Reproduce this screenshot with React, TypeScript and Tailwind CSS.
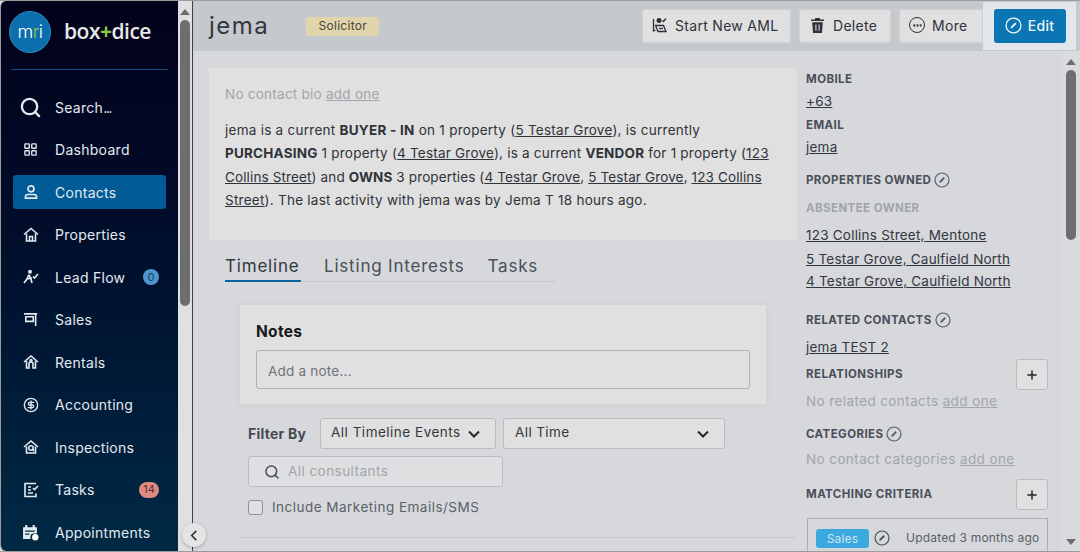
import { CircleDollarSign, Ellipsis, LayoutGrid, Plus, Search } from "lucide-react";
import type { ReactNode } from "react";

type IconProps = { className?: string };

const EditCircle = ({ className = "h-[17px] w-[17px]" }: IconProps) => (
  <svg viewBox="0 0 16 16" fill="none" className={className} stroke="currentColor">
    <circle cx="8" cy="8" r="7" strokeWidth="1.2" />
    <path d="M5.2 10.8l.4-1.700 4-4 1.300 1.300-4 4z" fill="currentColor" stroke="none" />
  </svg>
);

const HomeIcon = () => (
  <svg viewBox="0 0 16 16" fill="none" stroke="currentColor" strokeWidth="1.6" className="h-[16px] w-[16px]">
    <path d="M1 7.500L8 1.500l7 6" />
    <path d="M3.500 6.500V14h9V6.500" />
    <path d="M6.500 14V9.500h3V14" />
  </svg>
);

const LeadIcon = () => (
  <svg viewBox="0 0 16 16" fill="none" stroke="currentColor" strokeWidth="1.700" className="h-[16px] w-[16px]">
    <circle cx="7" cy="2.800" r="2" fill="currentColor" stroke="none" />
    <path d="M6 5.500L4 10l-3 4M6 6l2 4 1 4M4 10l5-1" />
    <path d="M10 7.500l1.500 1.500L15 5" />
  </svg>
);

const SalesIcon = () => (
  <svg viewBox="0 0 16 16" fill="none" stroke="currentColor" strokeWidth="1.700" className="h-[15px] w-[15px]">
    <path d="M1 2h14M13.500 2v13" />
    <path d="M3 5h8v5H3z" />
  </svg>
);

const RentalIcon = () => (
  <svg viewBox="0 0 16 16" fill="none" stroke="currentColor" strokeWidth="1.600" className="h-[16px] w-[16px]">
    <path d="M1 8l7-6 7 6" />
    <path d="M3.500 7v7h2.500v-4a2 2 0 014 0v4h2.500V7" />
    <circle cx="8" cy="6.500" r="1" />
  </svg>
);

const InspectIcon = () => (
  <svg viewBox="0 0 16 16" fill="none" stroke="currentColor" strokeWidth="1.600" className="h-[16px] w-[16px]">
    <path d="M1 8l7-6 7 6" />
    <path d="M3.500 7.500V14h9V7.500" />
    <circle cx="8" cy="9" r="2.200" />
    <path d="M9.500 10.500L11 12" />
  </svg>
);

const TaskIcon = () => (
  <svg viewBox="0 0 16 16" fill="none" stroke="currentColor" strokeWidth="1.600" className="h-[16px] w-[16px]">
    <path d="M13 1.500H2v13h11v-3" />
    <path d="M5 5h3M5 8h3M5 11h5" />
    <path d="M10 6l1.500 1.500L15 4" />
  </svg>
);

const ApptIcon = () => (
  <svg viewBox="0 0 16 16" className="h-[17px] w-[17px]">
    <path d="M1 3h2V1h2v2h5V1h2v2h2v6h-3a3 3 0 00-3 3v2H1z" fill="currentColor" />
    <path d="M3 6h9v1.200H3zM3 9h4v1.200H3z" fill="#012a45" />
    <circle cx="12.500" cy="12.500" r="3" fill="#fff" />
  </svg>
);

const UserIcon = () => (
  <svg viewBox="0 0 16 16" fill="none" stroke="currentColor" strokeWidth="1.700" className="h-[16px] w-[16px]">
    <circle cx="8" cy="4.800" r="3" />
    <path d="M2.500 14.200v-1.500c0-1.400 1-2.200 2.500-2.200h6c1.500 0 2.500.8 2.500 2.200v1.500z" />
  </svg>
);

const AmlIcon = () => (
  <svg viewBox="0 0 16 16" fill="none" stroke="#2d3138" strokeWidth="1.300" className="h-[16px] w-[16px]">
    <path d="M1.500 2v12l2-1" />
    <path d="M3.500 8.500h8l2.500 6H6z" />
    <circle cx="7" cy="3.500" r="2.500" fill="#2d3138" stroke="none" />
    <path d="M10.500 3.500l1 1 2.500-3" />
    <path d="M7 11.500h4" />
  </svg>
);

const TrashIcon = () => (
  <svg viewBox="0 0 16 16" className="h-[17px] w-[17px]" fill="#2d3138">
    <path d="M6 1h4l.6 1.300H14v1.500H2V2.300h3.400z" />
    <path d="M3 5h10l-.8 10H3.800zM6 7v6h1V7zm3 0v6h1V7z" fillRule="evenodd" />
  </svg>
);

const MoreIcon = () => (
  <span className="flex h-[16px] w-[16px] items-center justify-center rounded-full border-[1.500px] border-[#2d3138] text-[#2d3138]">
    <Ellipsis className="h-[11px] w-[11px]" strokeWidth={3} />
  </span>
);

const Chevron = () => (
  <svg viewBox="0 0 12 8" fill="none" stroke="#23262c" strokeWidth="2" className="h-[8px] w-[12px]">
    <path d="M1 1.500l5 5 5-5" />
  </svg>
);

const navItems: { label: ReactNode; key: string; icon: ReactNode; badge?: string; badgeClass?: string }[] = [
  {
    key: "search",
    label: (
      <>
        Search<span className="tracking-[-1.500px]">...</span>
      </>
    ),
    icon: <Search className="h-[23px] w-[23px]" strokeWidth={2.400} />,
  },
  { key: "dashboard", label: "Dashboard", icon: <LayoutGrid className="h-[15px] w-[15px]" strokeWidth={2.200} /> },
  { key: "contacts", label: "Contacts", icon: <UserIcon /> },
  { key: "properties", label: "Properties", icon: <HomeIcon /> },
  { key: "leadflow", label: "Lead Flow", icon: <LeadIcon />, badge: "0", badgeClass: "w-4 bg-[#4f96cf] text-[#123f63]" },
  { key: "sales", label: "Sales", icon: <SalesIcon /> },
  { key: "rentals", label: "Rentals", icon: <RentalIcon /> },
  { key: "accounting", label: "Accounting", icon: <CircleDollarSign className="h-[16px] w-[16px]" strokeWidth={2} /> },
  { key: "inspections", label: "Inspections", icon: <InspectIcon /> },
  { key: "tasks", label: "Tasks", icon: <TaskIcon />, badge: "14", badgeClass: "w-5 bg-[#de8a80] text-[#5c2d2a]" },
  { key: "appointments", label: "Appointments", icon: <ApptIcon /> },
];

const Sidebar = () => (
  <aside className="flex w-[178px] shrink-0 flex-col rounded-l-md border-l border-[#9b9b9b] bg-gradient-to-b from-[#02021a] via-[#00112e] to-[#012a45] text-[#e4eaf0]">
    <div className="ml-[10px] mr-[10px] flex h-[69px] items-center gap-[13px] border-b border-[#0f4a7c] pb-[7px]">
      <div className="-ml-[2px] flex h-[42px] w-[42px] shrink-0 items-center justify-center rounded-full border border-[#2b86c2] bg-[#0b6fae] text-[18px] font-light tracking-[-0.4px] text-white">
        m<span className="text-[#8bc53f]">r</span>i
      </div>
      <div className="text-[21px] font-semibold tracking-[-0.5px] text-[#e8e8e8] [font-family:'Open_Sans',sans-serif]">
        box<span className="font-bold text-[#8dc63f]">+</span>dice
      </div>
    </div>
    <nav className="mt-[20px] flex flex-col gap-[8.500px] pl-[12px] pr-[12px]">
      {navItems.map((item) => (
        <div
          key={item.key}
          className={`flex h-[34px] items-center rounded-[3px] ${item.key === "contacts" ? "bg-[#005b96]" : ""}`}
        >
          <span className="flex w-[35px] justify-center">{item.icon}</span>
          <span className="ml-[7px] flex-1 text-[14px] tracking-[0.28px]">{item.label}</span>
          {item.badge && (
            <span className={`mr-[7px] flex h-4 items-center justify-center rounded-full text-[11px] ${item.badgeClass}`}>
              {item.badge}
            </span>
          )}
        </div>
      ))}
    </nav>
  </aside>
);

const ScrollBar = ({ className, thumb, down }: { className: string; thumb: string; down?: boolean }) => (
  <div className={`flex shrink-0 flex-col items-center ${className}`}>
    <div className="mt-[8px] h-0 w-0 border-x-[5px] border-b-[6px] border-x-transparent border-b-[#6e6e6e]" />
    <div className={`mt-[5px] w-[10px] rounded-full bg-[#6e6e6e] ${thumb}`} />
    {down && <div className="mt-auto mb-[6px] h-0 w-0 border-x-[5px] border-t-[6px] border-x-transparent border-t-[#6e6e6e]" />}
  </div>
);

const HeaderButton = ({ icon, label, className }: { icon: ReactNode; label: string; className: string }) => (
  <button
    type="button"
    className={`flex h-[34px] items-center gap-[7px] rounded-[3px] border border-[#cfd2d6] bg-[#e0e0e0] pb-[2px] pl-[9px] text-[14px] tracking-[0.3px] text-[#2f333a] ${className}`}
  >
    {icon}
    {label}
  </button>
);

const Header = () => (
  <header className="flex h-[50px] shrink-0 items-center bg-[#c5c8cd] pl-[16px]">
    <h1 className="text-[24px] tracking-[1.500px] text-[#33373f]">jema</h1>
    <span className="ml-[37px] flex h-[19px] w-[73px] items-center justify-center rounded-[3px] bg-[#e0d5ab] text-[12px] tracking-[0.3px] text-[#4b4638]">
      Solicitor
    </span>
    <div className="ml-auto flex h-full items-center">
      <HeaderButton icon={<AmlIcon />} label="Start New AML" className="w-[149px]" />
      <HeaderButton icon={<TrashIcon />} label="Delete" className="ml-[8px] w-[92px]" />
      <HeaderButton icon={<MoreIcon />} label="More" className="ml-[8px] w-[84px] rounded-r-none" />
      <div className="mr-[4px] flex h-[48px] w-[93px] items-center justify-center bg-[#e3e6ea]">
        <button
          type="button"
          className="flex h-[34px] w-[72px] items-center justify-center gap-[6px] rounded-[3px] bg-[#0b76b3] pb-[2px] text-[14px] font-medium tracking-[0.3px] text-[#eef5fa]"
        >
          <EditCircle />
          Edit
        </button>
      </div>
    </div>
  </header>
);

const Main = () => (
  <div className="min-w-0 flex-1 pl-[16px] pt-[17px]">
    <section className="h-[172px] w-[588px] bg-[#e0e0e0] px-4 pt-[17px] text-[13.500px] text-[#2f333a]">
      <p className="leading-[18px] tracking-[0.25px] text-[#a2a5ab]">
        No contact bio <span className="underline">add one</span>
      </p>
      <p className="mt-[16px] whitespace-nowrap leading-[23.400px]">
        <span className="tracking-[0.26px]">
          jema is a current <b>BUYER - IN</b> on 1 property (<u>5 Testar Grove</u>), is currently
        </span>
        <br />
        <span className="tracking-[0.21px]">
          <b>PURCHASING</b> 1 property (<u>4 Testar Grove</u>), is a current <b>VENDOR</b> for 1 property (<u>123</u>
        </span>
        <br />
        <span className="tracking-[0.13px]">
          <u>Collins Street</u>) and <b>OWNS</b> 3 properties (<u>4 Testar Grove</u>, <u>5 Testar Grove</u>, <u>123 Collins</u>
        </span>
        <br />
        <span className="tracking-[0.25px]">
          <u>Street</u>). The last activity with jema was by Jema T 18 hours ago.
        </span>
      </p>
    </section>

    <div className="ml-[16px] mt-[15px] flex h-[27px] w-[332px] gap-[23px] border-b border-[#c6c8cc] text-[17px] leading-[22px] tracking-[0.8px] text-[#4a4f58]">
      <span className="h-[27px] w-[76px] whitespace-nowrap border-b-2 border-[#0b66a0] text-[#33373f]">Timeline</span>
      <span>Listing Interests</span>
      <span>Tasks</span>
    </div>

    <section className="ml-[31px] mt-[23px] h-[99px] w-[526px] bg-[#e0e0e0] px-4 pt-[17px] shadow-[0_0_8px_rgba(0,0,0,0.05)]">
      <h2 className="text-[15.500px] font-bold leading-[20px] tracking-[0.3px] text-[#15181d]">Notes</h2>
      <div className="mt-[8px] flex h-[39px] items-center rounded-[3px] border border-[#aeb1b6] px-[11px] pt-[3px] text-[13.500px] tracking-[0.22px] text-[#6f737a]">
        Add a note...
      </div>
    </section>

    <div className="ml-[39px] mt-[14px] flex items-center">
      <span className="w-[72px] whitespace-nowrap text-[14px] font-bold tracking-[0.25px] text-[#454a53]">Filter By</span>
      <div className="flex h-[31px] w-[176px] items-center justify-between whitespace-nowrap rounded-[3px] border border-[#b9bcc1] bg-[#e0e0e0] pl-[10px] pr-[15px] text-[13.500px] tracking-[0.5px] text-[#33373f]">
        <span className="pb-[2px]">All Timeline Events</span> <Chevron />
      </div>
      <div className="ml-[7px] flex h-[31px] w-[222px] items-center justify-between rounded-[3px] border border-[#b9bcc1] bg-[#e0e0e0] pl-[11px] pr-[15px] text-[13.500px] tracking-[0.4px] text-[#33373f]">
        <span className="pb-[2px]">All Time</span> <Chevron />
      </div>
    </div>

    <div className="ml-[39px] mt-[7px] flex h-[31px] w-[255px] items-center rounded-[3px] border border-[#b9bcc1] bg-[#dedfe0] pl-[15px] text-[13.500px] tracking-[0.45px] text-[#a2a5ab]">
      <Search className="mr-[8px] h-[16px] w-[16px] text-[#4a4f58]" strokeWidth={2.300} />
      All consultants
    </div>

    <label className="ml-[39px] mt-[10px] flex items-center gap-[9px] text-[13.500px] tracking-[0.48px] text-[#5a5f68]">
      <span className="h-[15px] w-[15px] rounded-[3px] border border-[#8e9197] bg-[#e0e0e0]" />
      Include Marketing Emails/SMS
    </label>

    <div className="ml-[31px] mt-[20px] w-[557px] border-t border-[#c6c8cc]" />
  </div>
);

const Label = ({ children, className = "", color = "text-[#4a4f58]" }: { children: ReactNode; className?: string; color?: string }) => (
  <div className={`flex items-center gap-[3px] whitespace-nowrap text-[11.500px] font-bold leading-[16px] tracking-[0.42px] ${color} ${className}`}>
    {children}
  </div>
);

const Link = ({ children, className = "" }: { children: ReactNode; className?: string }) => (
  <div className={`text-[13.500px] leading-[18px] tracking-[0.22px] text-[#33373f] underline ${className}`}>{children}</div>
);

const Empty = ({ text, className }: { text: string; className: string }) => (
  <div className={`whitespace-nowrap text-[13.500px] leading-[18px] tracking-[0.4px] text-[#a2a5ab] ${className}`}>
    {text} <span className="underline">add one</span>
  </div>
);

const PlusButton = () => (
  <button type="button" className="flex h-[31px] w-[32px] items-center justify-center rounded-[3px] border border-[#b9bcc1] bg-[#e0e0e0] text-[#1d2026]">
    <Plus className="h-[14px] w-[14px]" strokeWidth={2.500} />
  </button>
);

const Side = () => (
  <div className="w-[256px] shrink-0 pt-[20px]">
    <Label>MOBILE</Label>
    <Link className="mt-[5px]">+63</Link>
    <Label className="mt-[7px]">EMAIL</Label>
    <Link className="mt-[5px] w-fit">jema</Link>
    <Label className="mt-[16px]">
      PROPERTIES OWNED <EditCircle className="h-[16px] w-[16px] text-[#5a5f68]" />
    </Label>
    <Label className="mt-[12px]" color="text-[#a2a5ab]">ABSENTEE OWNER</Label>
    <Link className="mt-[10px]">123 Collins Street, Mentone</Link>
    <Link className="mt-[5.500px]">5 Testar Grove, Caulfield North</Link>
    <Link className="mt-[4.500px]">4 Testar Grove, Caulfield North</Link>
    <Label className="mt-[22px]">
      RELATED CONTACTS <EditCircle className="h-[16px] w-[16px] text-[#5a5f68]" />
    </Label>
    <Link className="mt-[10px]">jema TEST 2</Link>
    <div className="mt-[3px] flex h-[31px] items-center justify-between pr-[14px]">
      <Label className="pb-[2px]">RELATIONSHIPS</Label>
      <PlusButton />
    </div>
    <Empty text="No related contacts" className="mt-[2px]" />
    <Label className="mt-[16px]">
      CATEGORIES <EditCircle className="h-[16px] w-[16px] text-[#5a5f68]" />
    </Label>
    <Empty text="No contact categories" className="mt-[8px]" />
    <div className="mt-[11px] flex h-[31px] items-center justify-between pr-[14px]">
      <Label className="pb-[2px]">MATCHING CRITERIA</Label>
      <PlusButton />
    </div>
    <div className="ml-[1px] mt-[8px] flex h-[60px] w-[241px] items-start border border-[#a9acb1] pl-[8px] pt-[10px]">
      <span className="flex h-[19px] w-[53px] items-center justify-center rounded-[3px] bg-[#3aa9e0] text-[12px] tracking-[0.2px] text-[#cfe6f3]">
        Sales
      </span>
      <EditCircle className="ml-[5px] mt-[1px] h-[16px] w-[16px] text-[#4a4f58]" />
      <span className="ml-[16px] whitespace-nowrap text-[12px] leading-[18px] tracking-[0.2px] text-[#5a5f68]">Updated 3 months ago</span>
    </div>
  </div>
);

export default function App() {
  return (
    <div className="relative flex h-[552px] w-[1080px] overflow-hidden border-y border-[#9b9b9b] bg-[#d6d8dc] [font-family:Inter,'Noto_Sans',sans-serif]">
      <Sidebar />
      <ScrollBar className="w-[15px] border-r border-[#3c3f44] bg-[#e0e0e0]" thumb="h-[286px]" />
      <div className="flex min-w-0 flex-1 flex-col">
        <Header />
        <div className="flex min-h-0 flex-1 overflow-hidden">
          <Main />
          <Side />
          <ScrollBar className="w-[18px] bg-[#dadbde]" thumb="h-[170px]" down />
        </div>
      </div>
      <button
        type="button"
        className="absolute left-[182px] top-[522px] flex h-[24px] w-[24px] items-center justify-center rounded-full bg-[#e4e4e4] shadow-[0_1px_3px_rgba(0,0,0,0.25)]"
        aria-label="Collapse"
      >
        <svg viewBox="0 0 8 12" fill="none" stroke="#33373f" strokeWidth="1.800" className="h-[11px] w-[8px]">
          <path d="M6.500 1L1.500 6l5 5" />
        </svg>
      </button>
    </div>
  );
}
